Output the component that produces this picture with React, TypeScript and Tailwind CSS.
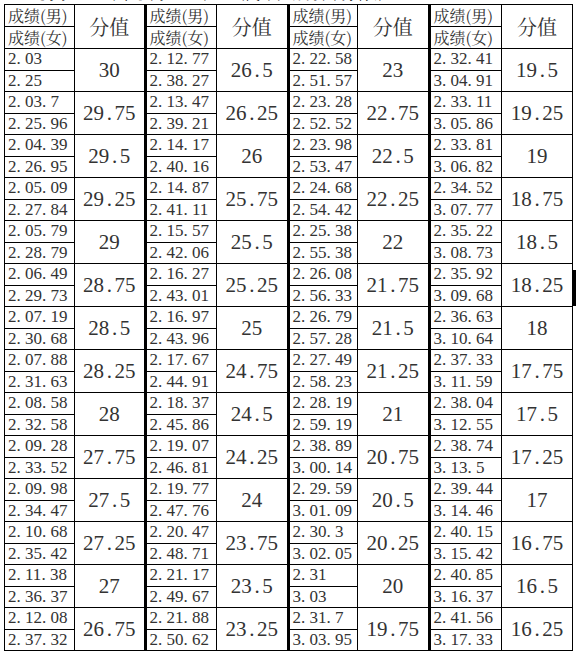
import React from "react";

type Row = [string, string, string];

const GROUPS: Row[][] = [
  [
    ["2.03", "2.25", "30"],
    ["2.03.7", "2.25.96", "29.75"],
    ["2.04.39", "2.26.95", "29.5"],
    ["2.05.09", "2.27.84", "29.25"],
    ["2.05.79", "2.28.79", "29"],
    ["2.06.49", "2.29.73", "28.75"],
    ["2.07.19", "2.30.68", "28.5"],
    ["2.07.88", "2.31.63", "28.25"],
    ["2.08.58", "2.32.58", "28"],
    ["2.09.28", "2.33.52", "27.75"],
    ["2.09.98", "2.34.47", "27.5"],
    ["2.10.68", "2.35.42", "27.25"],
    ["2.11.38", "2.36.37", "27"],
    ["2.12.08", "2.37.32", "26.75"],
  ],
  [
    ["2.12.77", "2.38.27", "26.5"],
    ["2.13.47", "2.39.21", "26.25"],
    ["2.14.17", "2.40.16", "26"],
    ["2.14.87", "2.41.11", "25.75"],
    ["2.15.57", "2.42.06", "25.5"],
    ["2.16.27", "2.43.01", "25.25"],
    ["2.16.97", "2.43.96", "25"],
    ["2.17.67", "2.44.91", "24.75"],
    ["2.18.37", "2.45.86", "24.5"],
    ["2.19.07", "2.46.81", "24.25"],
    ["2.19.77", "2.47.76", "24"],
    ["2.20.47", "2.48.71", "23.75"],
    ["2.21.17", "2.49.67", "23.5"],
    ["2.21.88", "2.50.62", "23.25"],
  ],
  [
    ["2.22.58", "2.51.57", "23"],
    ["2.23.28", "2.52.52", "22.75"],
    ["2.23.98", "2.53.47", "22.5"],
    ["2.24.68", "2.54.42", "22.25"],
    ["2.25.38", "2.55.38", "22"],
    ["2.26.08", "2.56.33", "21.75"],
    ["2.26.79", "2.57.28", "21.5"],
    ["2.27.49", "2.58.23", "21.25"],
    ["2.28.19", "2.59.19", "21"],
    ["2.38.89", "3.00.14", "20.75"],
    ["2.29.59", "3.01.09", "20.5"],
    ["2.30.3", "3.02.05", "20.25"],
    ["2.31", "3.03", "20"],
    ["2.31.7", "3.03.95", "19.75"],
  ],
  [
    ["2.32.41", "3.04.91", "19.5"],
    ["2.33.11", "3.05.86", "19.25"],
    ["2.33.81", "3.06.82", "19"],
    ["2.34.52", "3.07.77", "18.75"],
    ["2.35.22", "3.08.73", "18.5"],
    ["2.35.92", "3.09.68", "18.25"],
    ["2.36.63", "3.10.64", "18"],
    ["2.37.33", "3.11.59", "17.75"],
    ["2.38.04", "3.12.55", "17.5"],
    ["2.38.74", "3.13.5", "17.25"],
    ["2.39.44", "3.14.46", "17"],
    ["2.40.15", "3.15.42", "16.75"],
    ["2.40.85", "3.16.37", "16.5"],
    ["2.41.56", "3.17.33", "16.25"],
  ],
];

const COLS = [70, 70.5, 71.5, 71.5, 69.5, 71.5, 72.5, 71];

const num = "font-['Liberation_Serif',serif]";
const cjk = "font-['Noto_Serif_CJK_SC','Liberation_Serif','Noto_Sans_CJK_SC',serif]";

// SimSun-style: the dot takes a full half-width cell
function Num({ v }: { v: string }) {
  const parts = v.split(".");
  return (
    <>
      {parts.map((p, i) => (
        <React.Fragment key={i}>
          {i > 0 && <span className="inline-block w-[0.5em]">.</span>}
          {p}
        </React.Fragment>
      ))}
    </>
  );
}

function scoreCell(g: number) {
  return `border border-black px-[3px] py-0 text-left align-middle whitespace-nowrap ${
    g > 0 ? "border-l-[3px] border-l-double" : ""
  }`;
}

export default function App() {
  return (
    <div className="relative h-[651px] w-[576px] overflow-hidden bg-white text-[#333]">
      {/* cut-off title line */}
      <div className="h-[4px] overflow-hidden">
        <p className={`-mt-[16px] pl-[40px] text-[16px] leading-[18px] ${cjk}`}>
          男子1000米、女子800米跑（高中）成绩评分标准
        </p>
      </div>

      <table className="ml-[4px] w-[568px] table-fixed border-collapse">
        <colgroup>
          {COLS.map((w, i) => (
            <col key={i} style={{ width: w }} />
          ))}
        </colgroup>
        <thead>
          <tr className="h-[22px]">
            {GROUPS.map((_, g) => (
              <React.Fragment key={g}>
                <th className={`${scoreCell(g)} text-[16px] font-normal leading-[18px] ${cjk}`}>
                  成绩(男)
                </th>
                <th
                  rowSpan={2}
                  className={`border border-black p-0 text-center text-[20px] font-normal leading-[24px] ${cjk}`}
                >
                  分值
                </th>
              </React.Fragment>
            ))}
          </tr>
          <tr className="h-[22px]">
            {GROUPS.map((_, g) => (
              <th
                key={g}
                className={`${scoreCell(g)} text-[16px] font-normal leading-[18px] ${cjk}`}
              >
                成绩(女)
              </th>
            ))}
          </tr>
        </thead>
        <tbody>
          {GROUPS[0].map((_, i) => (
            <React.Fragment key={i}>
              <tr className="h-[21.5px]">
                {GROUPS.map((rows, g) => (
                  <React.Fragment key={g}>
                    <td className={`${scoreCell(g)} text-[17px] leading-[18px] ${num}`}>
                      <Num v={rows[i][0]} />
                    </td>
                    <td
                      rowSpan={2}
                      className={`border border-black p-0 text-center align-middle whitespace-nowrap text-[21px] leading-[24px] ${num}`}
                    >
                      <Num v={rows[i][2]} />
                    </td>
                  </React.Fragment>
                ))}
              </tr>
              <tr className="h-[21.5px]">
                {GROUPS.map((rows, g) => (
                  <td key={g} className={`${scoreCell(g)} text-[17px] leading-[18px] ${num}`}>
                    <Num v={rows[i][1]} />
                  </td>
                ))}
              </tr>
            </React.Fragment>
          ))}
        </tbody>
      </table>

      {/* scan artefact on the right edge */}
      <div className="absolute right-0 top-[270px] h-[36px] w-[4px] bg-black" />
    </div>
  );
}
